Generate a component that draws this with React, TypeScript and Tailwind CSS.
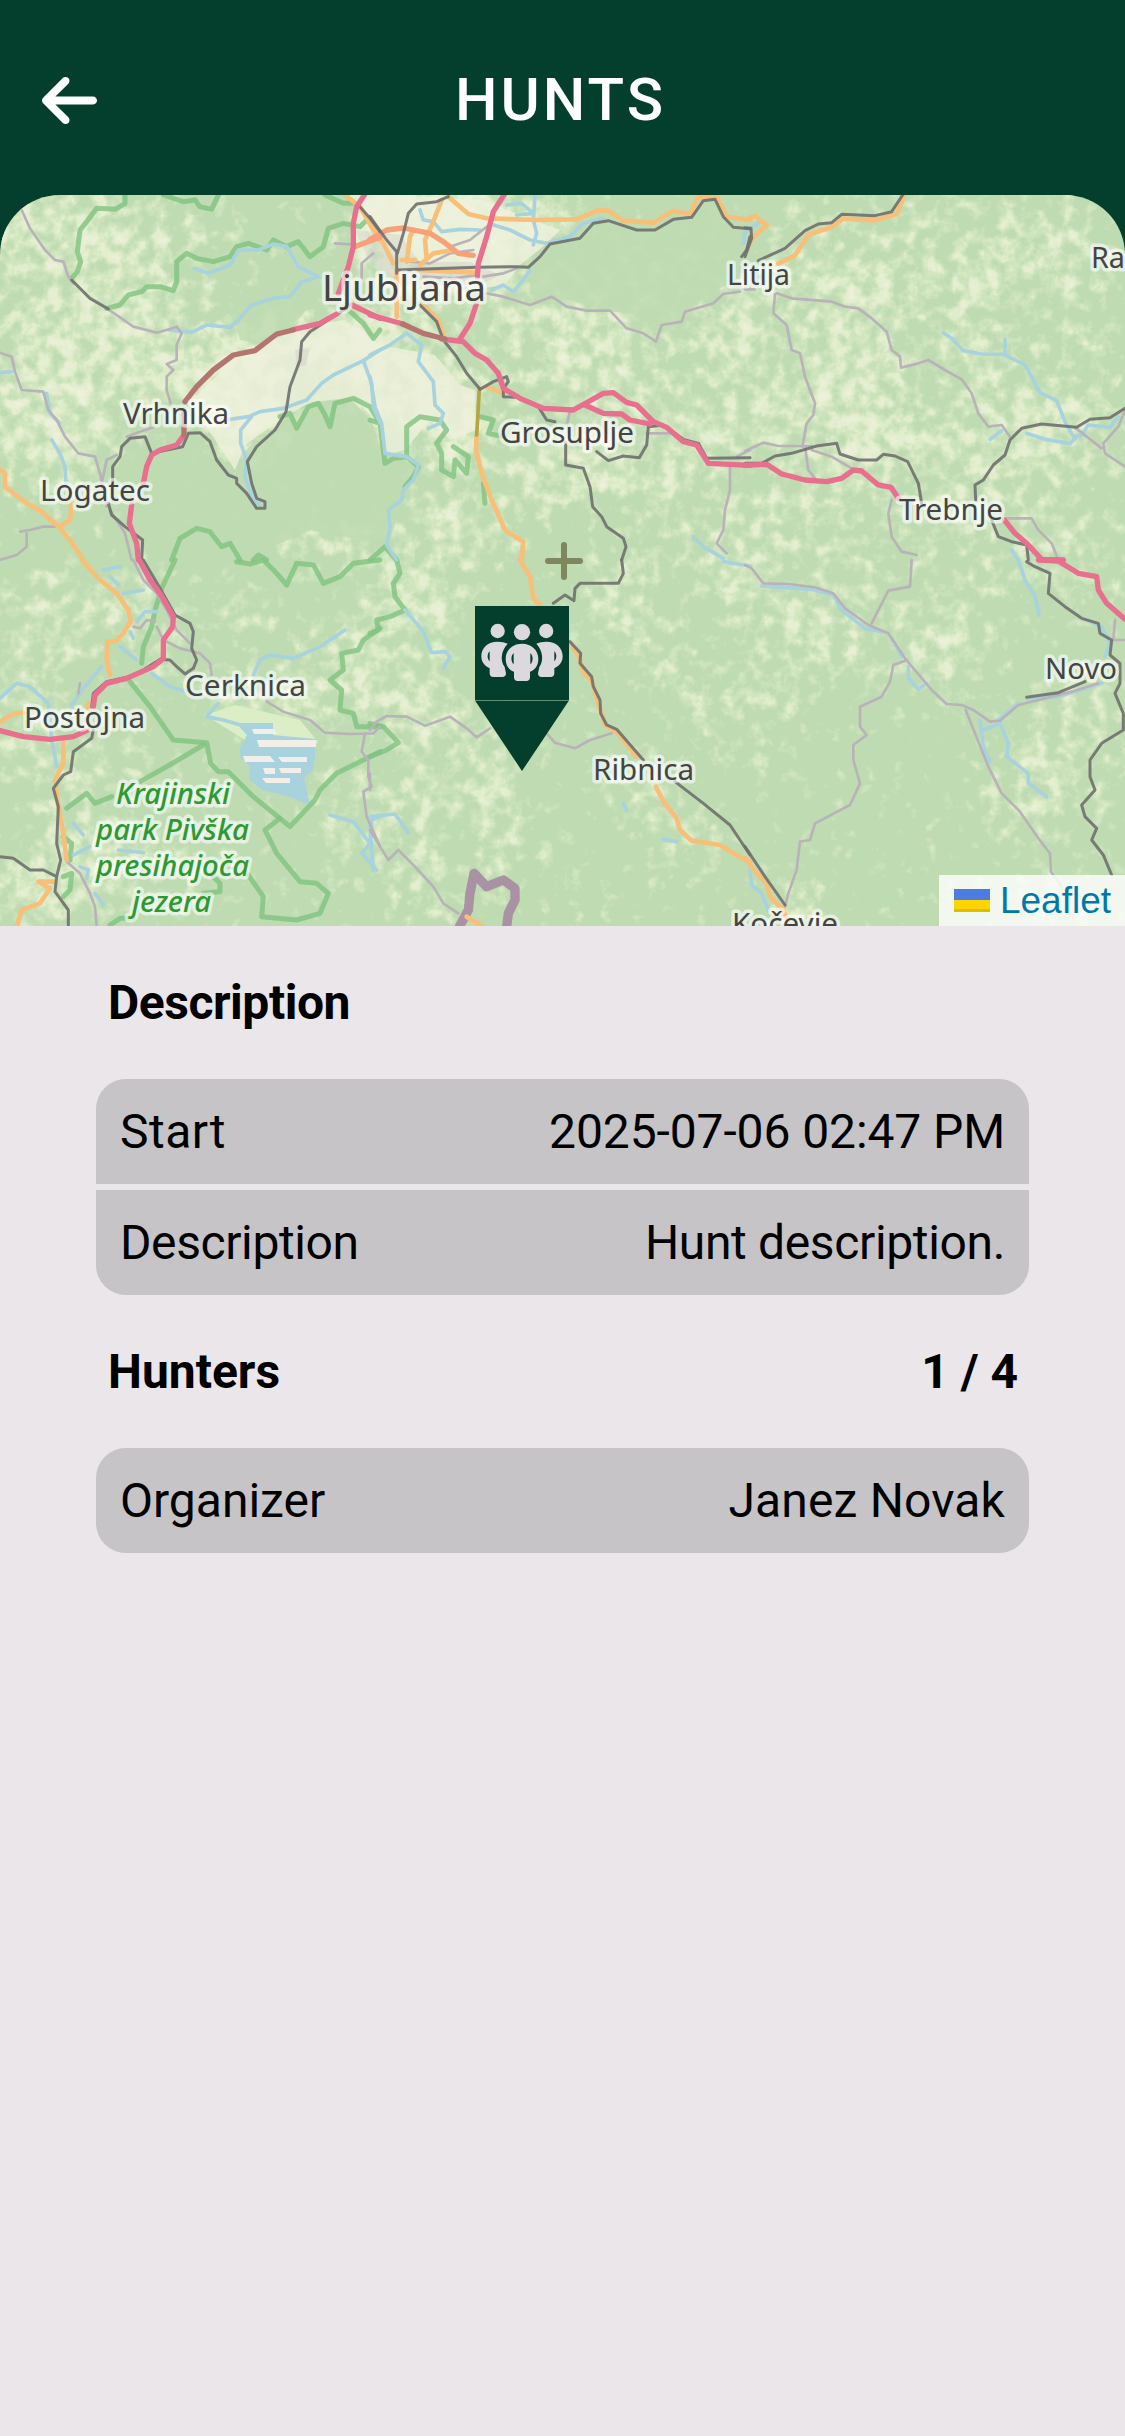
import React from "react";
import { FaArrowLeft } from "react-icons/fa6";

type Kind = "motorway" | "trunk" | "primary" | "rail" | "minor" | "river" | "park" | "border" | "tunnel" | "orange";

const STYLE: Record<Kind, { stroke: string; width: number; opacity?: number }> = {
  park: { stroke: "#80c37f", width: 15, opacity: 0.8 },
  river: { stroke: "#a8d3de", width: 11 },
  minor: { stroke: "#b9b3b9", width: 8 },
  primary: { stroke: "#f8bf79", width: 14 },
  orange: { stroke: "#f6a178", width: 16 },
  rail: { stroke: "#6f706e", width: 9, opacity: 0.9 },
  motorway: { stroke: "#e86f8d", width: 16 },
  tunnel: { stroke: "#b67470", width: 16 },
  trunk: { stroke: "#b5a640", width: 11 },
  border: { stroke: "#a585a0", width: 28, opacity: 0.85 },
};

const ORDER: Kind[] = ["park", "river", "minor", "border", "primary", "orange", "trunk", "rail", "motorway", "tunnel"];

/* Map sheets, each drawn on a grid three times finer than the page. */
const SHEETS: { x: number; y: number; lines: [Kind, string][] }[] = [
  {
    x: 0,
    y: 190,
    lines: [
      ["park", "M375 10 375 40 345 58 290 55 260 95 240 120 232 185 242 215 232 245 215 265"],
      ["park", "M320 355 360 345 385 315 425 305 440 290 480 290 520 302 530 275 530 215 560 190 590 205 640 215 690 200 710 170 745 160 800 180 820 150 860 170 895 155 930 200 970 170 985 115 1030 100 1080 110 1100 90"],
      ["park", "M490 15 550 35 585 30 600 50 635 58 655 15"],
      ["park", "M975 15 1030 40 1060 40"],
      ["park", "M515 1110 540 1045 590 1015 630 1025 665 1070 690 1060 720 1110M760 1110 775 1095 800 1110"],
      ["park", "M840 680 870 670 890 715 925 650 955 640 975 675 990 710 1005 640 1060 625 1110 650 1140 700"],
      ["park", "M1045 360 1090 400 1120 445 1140 420"],
      ["river", "M583 235 625 250 690 225 715 180 775 180 820 162 860 170 895 230 955 260 905 275 870 320 820 325 755 345 715 390 690 412 620 405 575 427 510 420"],
      ["river", "M690 688 745 680 780 665 850 655 920 630 965 580 1000 555 1090 512 1140 480M1090 512 1115 580 1120 650 1140 700"],
      ["river", "M755 680 722 720 722 760 740 810 735 860 760 930 780 945"],
      ["river", "M155 750 180 790 195 830 198 880M0 548 35 545"],
      ["river", "M140 610 150 670 180 700"],
      ["minor", "M65 60 90 115 135 180 165 210 190 215 205 260 220 280"],
      ["minor", "M320 355 350 375 400 410 470 428 500 420 530 410 545 430 530 465 530 510 500 522 520 540 500 560 500 600 512 640"],
      ["minor", "M0 488 35 500 45 545 65 600 130 605 145 660 170 690 195 740 235 790 285 800 300 850 320 950"],
      ["minor", "M350 795 320 810 305 880M60 1025 90 1020 130 1010 180 1010M80 1030 80 1070 50 1095 0 1110"],
      ["minor", "M330 960 375 1030 395 1110M1005 160 1080 165M1120 190 1085 220 1085 265"],
      ["minor", "M380 740 420 725 460 712"],
      ["primary", "M0 840 15 850 15 890 80 940 125 965 180 1015 210 1050 250 1110M180 1010 210 990 215 940"],
      ["primary", "M1035 15 1080 50 1120 120 1140 150"],
      ["orange", "M1060 172 1140 142"],
      ["motorway", "M1095 12 1070 50 1060 100 1060 170 1045 230 1015 310"],
      ["motorway", "M1055 345 1140 385"],
      ["tunnel", "M555 635 590 590 640 540 700 495 765 482 830 432 880 420"],
      ["motorway", "M875 420 960 400 1010 372"],
      ["tunnel", "M552 670 552 735"],
      ["motorway", "M552 735 530 765 480 780 455 795 440 830 430 880M395 945 388 1000 410 1060 415 1110"],
      ["rail", "M1140 125 1110 85 1075 45"],
      ["rail", "M1040 355 1000 380 930 425 905 455 900 510 870 590 858 665 825 720 770 770 742 815 755 880 770 925 795 935 795 955 770 955 740 910 710 880 710 865 685 855 650 810 630 755 600 728 565 730 548 770 500 780 455 790 435 740 390 745 365 770 360 800 338 830 338 880M325 940 335 975 375 1010 428 1050 425 1110"],
      ["rail", "M215 270 270 325 325 357"],
    ],
  },
  {
    x: 370,
    y: 190,
    lines: [
      ["park", "M0 690 30 700 40 780 45 820 70 805 110 800 145 830 130 860 105 890M110 790 110 710 150 680 210 690 230 720 200 760 215 790 215 840 250 860 255 810 290 850 295 800 250 770"],
      ["park", "M330 680 370 690 355 730 400 740M340 880 345 940M0 1110 45 1070 80 1110"],
      ["river", "M0 495 60 465 110 430 155 465 145 515 190 575 195 645 220 670 210 700 175 715"],
      ["river", "M0 560 15 650 35 700 45 790 110 800 145 825 130 870 100 900 95 930 55 960 60 1010 50 1065 80 1110"],
      ["river", "M150 60 160 90 190 95 215 125 270 118 330 120M370 105 420 120 480 150 530 160 600 140 640 100 700 85"],
      ["river", "M490 165 500 130 490 90 495 20M410 45 455 40 490 70 440 75M480 240 460 270 430 305 400 285 365 300"],
      ["river", "M1125 130 1120 160M970 1040 1000 1070 1060 1105"],
      ["minor", "M350 310 400 320 480 345 545 320 590 350 650 362 720 362 770 415 820 430 858 455 875 405 935 395 945 365 1030 340 1060 312 1110 305"],
      ["minor", "M1080 830 1080 900 1065 960 1060 1020 1040 1060 1070 1090M600 660 590 710M830 730 900 730M1100 800 1140 780M240 170 300 150 350 110M120 215 180 220 240 190 310 180M160 260 250 265 320 255M340 260 400 250 440 235"],
      ["primary", "M235 20 295 72 350 85 500 90 620 88 680 62 715 62 760 92 850 98 910 62 960 72 985 22 1040 20 1070 80 1140 90"],
      ["primary", "M0 85 40 160 70 220M215 30 190 95 165 150 170 205M110 215 120 140 130 120M95 210 135 210M150 225 190 190 250 180M140 240 320 248M80 240 80 380"],
      ["primary", "M320 735 318 780 335 850 365 930 405 1020 460 1055 455 1110M350 590 400 610"],
      ["trunk", "M328 595 325 650 320 735"],
      ["primary", "M160 345 205 390 222 440"],
      ["orange", "M0 148 50 120 100 114 180 130 220 155 265 190 310 196"],
      ["motorway", "M405 10 370 65 350 140 325 220 322 260M318 345 300 400 268 450"],
      ["motorway", "M0 375 100 402M215 447 280 455 315 490 350 510 385 550 400 595 450 625 520 655 610 660 700 610 730 608 770 637 800 645 850 695 890 712 940 755 980 765 1015 820 1140 826"],
      ["motorway", "M645 645 700 670 755 672 780 690 840 702"],
      ["tunnel", "M98 402 160 430 225 447"],
      ["rail", "M0 80 50 150 80 185 80 250M80 240 320 232 440 230 475 232 510 200 540 162 630 145 670 100 715 92 800 120 855 120 910 88 965 82 1000 32 1035 28 1060 80 1090 112 1140 116"],
      ["rail", "M235 20 200 35 140 42 115 70 100 130 82 190M150 345 200 395 220 450 260 500 290 550 330 598 370 575 410 560 415 575 400 595 400 620 440 622 505 650 530 690 555 695"],
      ["rail", "M680 785 715 812 760 798 808 803 830 765 835 710 880 705 940 748 985 760 1010 805 1140 803"],
      ["rail", "M587 755 587 825 640 835 660 890 668 950 695 980 710 1010 760 1045 768 1070 755 1110M1140 140 1130 180 1115 200"],
    ],
  },
  {
    x: 745,
    y: 190,
    lines: [
      ["river", "M595 428 620 445 655 482 710 492 775 493 840 525 885 608 935 632 960 695 985 740 1010 735 1030 705 1095 712 1120 680M780 448 780 490"],
      ["river", "M735 748 770 722M845 730 900 748 975 760 1000 735M800 1080 820 1110M0 125 40 100"],
      ["minor", "M0 298 30 298M95 310 140 325 260 335 300 350 340 355 380 385 425 425 440 480 465 500 468 533 520 520 550 510 600 540 650 568 680 610 700 670 730 710 770 705 795 740"],
      ["minor", "M90 312 85 370 125 405 140 480 165 490 180 560 210 640 205 675 185 700 172 770M0 783 55 758 100 768 200 768M180 770 190 840 210 865M200 780 260 800 320 835M440 930 430 970 440 1040 470 1085 515 1095"],
      ["minor", "M1140 660 1120 710 1075 760 1080 790 1140 830M990 712 1070 775M775 985 860 985 880 1020 920 1060 940 1110"],
      ["primary", "M0 90 30 78 65 105 20 145 5 180"],
      ["primary", "M478 18 455 71 390 91 295 86 260 111 190 134 150 196 100 221"],
      ["motorway", "M0 826 65 823 110 852 180 870 245 875 290 865 325 840 350 843 400 885 438 892 460 925M778 990 810 1030 845 1060 890 1108 955 1110"],
      ["rail", "M0 113 18 115 20 145 0 200M40 212 120 175 180 122 220 102 260 98 290 73 390 77 440 65 475 12"],
      ["rail", "M0 820 50 820 90 798 140 790 215 768 275 760 285 792 340 810 395 810 415 793 450 798 488 815 520 880 530 940"],
      ["rail", "M1140 655 1095 683 1035 688 995 712 890 702 830 715 795 750 780 795 745 825 715 870 690 885 692 930M740 990 760 1040 800 1055 845 1065 850 1110"],
    ],
  },
  {
    x: 0,
    y: 560,
    lines: [
      ["park", "M525 0 485 85 465 150 455 200 430 260 425 310M390 365 450 440 520 540 620 548 632 610 655 635 685 635 760 710 840 775 870 800 945 720 960 690 1010 640 1140 575"],
      ["park", "M840 775 795 810 830 880 900 965 950 970 985 1000 960 1060 890 1080 785 1070 790 1010 745 945M610 555 500 620 420 665M200 745 260 700 285 730 335 710"],
      ["park", "M710 5 750 12 790 0 830 40 860 75 890 10 940 15 970 70 1020 50 1060 10 1140 0"],
      ["park", "M1140 205 1090 240 1075 270 1025 280 1030 330 990 360 1025 390 1020 450 1060 460 1070 500 1140 500"],
      ["park", "M190 830 215 850 210 900M190 950 215 940 210 990 190 1010M400 1075 360 1075 330 1095M640 950 660 970 660 995 610 1000"],
      ["river", "M310 30 360 20M330 50 355 75M370 100 430 90M410 185 435 155 470 155M390 215 400 235M360 260 410 300M305 320 250 385 215 435"],
      ["river", "M0 415 50 370 90 380 145 430 155 540 170 620M455 340 510 380 560 395M1035 210 960 260 880 295 810 285 780 300 760 345M655 430 620 470 670 480 740 500"],
      ["river", "M990 765 1060 785 1110 850 1085 880 1130 930M1110 850 1115 780 1140 770M220 790 250 825M220 885 270 860M240 920 265 930 260 955M285 1000 310 1035M355 870 430 878"],
      ["minor", "M400 0 430 60 470 100 500 150 530 210 570 250M470 200 490 240 540 265 600 280 630 310 635 345M400 200 420 205 440 180 465 185"],
      ["minor", "M800 425 850 455 930 480 975 518 1050 522 1120 520 1140 500M1095 520 1085 575 1105 600 1105 650 1115 680 1090 695 1100 770 1140 860"],
      ["minor", "M200 905 240 940 270 1000 285 1040 290 1100M240 370 235 400"],
      ["primary", "M245 0 300 60 350 100 385 150 392 185 370 220 345 245 322 245 320 300 330 345M0 485 40 462 70 458M265 430 262 445M190 545 190 610 165 660 175 740 190 820 200 900M160 965 115 965 150 985 120 1030 65 1050 50 1100"],
      ["motorway", "M418 0 450 60 480 100 520 170 518 200 490 240 490 295 460 320 380 355 320 370 285 405 280 440M0 512 70 530 150 538 220 530 260 512"],
      ["rail", "M430 0 480 85 525 165 570 190 580 215 575 265 590 300 580 325 555 342 530 320 510 300 480 298 430 330 380 352 320 365 280 400 275 440M280 510 275 535 220 575 212 635 190 645 160 685 175 740 170 850 182 900 170 950 130 930 90 930 40 895 0 890M170 950 165 995 205 1050 205 1095"],
    ],
  },
  {
    x: 370,
    y: 560,
    lines: [
      ["park", "M80 0 90 40 70 70 75 110 105 150 60 170 20 180 25 210 0 220M0 490 40 500 85 548 50 570 0 590"],
      ["river", "M105 150 160 215 185 278 225 275 240 290 220 325M0 770 75 762 115 818M0 800 10 930M760 730 770 750M880 838 920 845M1060 5 1140 18"],
      ["minor", "M0 510 20 485 50 468 110 470 165 497 240 470 290 505 320 532 360 505M530 520 555 548 615 565 660 540 725 520M0 810 55 900 85 870 130 915 190 980 220 1030 265 1060M0 640 0 690"],
      ["border", "M268 1100 295 1050 300 1000 312 940 350 980 400 960 435 985 435 1020 415 1060 410 1100"],
      ["primary", "M450 0 480 50 490 115 510 135M600 250 628 290 640 340 665 360 685 430 705 495 740 515 800 590M858 680 880 725 920 775 930 810 965 842 1050 855 1090 880 1140 905M290 1070 335 1098"],
      ["rail", "M755 0 760 40 745 70 630 70 615 85 612 122 585 105 550 130M600 245 632 280 630 310 665 350 670 380 690 420 692 460 710 495 740 508 820 600M915 665 1000 730 1080 795 1140 885"],
    ],
  },
  {
    x: 745,
    y: 560,
    lines: [
      ["river", "M50 78 200 88 265 105 290 150 360 205 410 215M440 235 470 290M490 320 490 355 520 388 545 370M705 480 715 560 735 605M715 510 765 490 790 550 785 590 850 640 850 670 905 710M820 430 760 480M820 0 840 60 870 110 882 165M1020 178 1070 200 1095 250 1080 290M850 418 940 410 1070 370M15 930 20 975 50 1000 70 1050"],
      ["minor", "M0 15 20 25 55 70 130 72 210 82 265 100 300 145 370 195 430 220 480 295 560 390 605 432 650 435 685 450 735 485 765 482 820 435 900 415 980 395 1060 370M500 0 495 80 430 92 380 190M480 302 445 315 435 365 410 410 345 440 345 500 365 525 325 555 325 600 345 670 315 735 210 790 195 840 165 845 155 930 130 1000 120 1040"],
      ["minor", "M662 450 690 520 730 620 770 700 825 755 880 835 915 880 918 935 950 980M1110 180 1105 240 1140 240"],
      ["primary", "M0 895 35 940 65 970 75 1010 115 1050 130 1095"],
      ["motorway", "M880 0 940 3 1000 40 1055 50 1060 90 1085 130 1140 178"],
      ["rail", "M0 860 60 950 120 1035M845 5 870 20 915 40 910 100 960 140 1010 175 1060 190 1065 220 1100 240 1095 285 1125 310 1125 370 1110 400 1135 460 1135 510 1070 550 1035 600 1035 650 1050 690 1010 735 1020 770 1055 805 1040 840 1075 885 1100 945M845 412 940 398 1020 365"],
    ],
  },
];

/* How open the terrain is: cx, cy, rx, ry, strength */
const OPEN: [number, number, number, number, number][] = [
  [60, 330, 120, 140, 0.2], [110, 230, 130, 50, 0.2], [140, 340, 130, 60, 0.2], [50, 440, 60, 70, 0.2],
  [230, 390, 60, 55, 0.36], [290, 340, 45, 35, 0.3], [390, 370, 60, 70, 0.36], [350, 340, 40, 30, 0.3],
  [260, 435, 35, 40, 0.35], [430, 240, 80, 60, 0.5], [510, 220, 80, 25, 0.42], [390, 210, 40, 30, 0.4],
  [450, 420, 35, 50, 0.35], [500, 290, 60, 40, 0.2], [560, 360, 90, 60, 0.2], [480, 490, 70, 80, 0.17],
  [580, 470, 60, 40, 0.27], [650, 330, 110, 90, 0.16], [640, 450, 80, 50, 0.16], [720, 430, 60, 30, 0.24],
  [800, 340, 100, 80, 0.2], [900, 360, 100, 110, 0.16], [840, 430, 90, 50, 0.2], [1040, 330, 90, 110, 0.17],
  [940, 240, 180, 60, 0.18], [1080, 440, 60, 50, 0.2], [1010, 440, 60, 40, 0.22], [890, 480, 130, 50, 0.16],
  [700, 520, 80, 60, 0.17], [800, 560, 90, 60, 0.18], [990, 540, 90, 60, 0.19], [1090, 560, 50, 60, 0.16],
  [620, 600, 35, 50, 0.3], [670, 660, 30, 35, 0.25], [700, 710, 22, 40, 0.2], [780, 660, 60, 60, 0.18],
  [880, 640, 90, 50, 0.17], [960, 650, 50, 50, 0.18], [1080, 740, 60, 80, 0.2], [1020, 800, 50, 60, 0.2],
  [430, 560, 60, 70, 0.18], [400, 640, 60, 80, 0.22], [460, 760, 60, 60, 0.22], [500, 830, 30, 70, 0.22],
  [400, 830, 40, 60, 0.22], [430, 890, 40, 40, 0.2], [640, 790, 35, 40, 0.24], [690, 840, 40, 30, 0.24],
  [50, 620, 60, 50, 0.24], [30, 720, 50, 60, 0.24], [130, 600, 30, 40, 0.26], [240, 610, 40, 30, 0.2],
  [330, 670, 40, 60, 0.2], [270, 700, 60, 25, 0.3], [110, 770, 50, 30, 0.2], [70, 850, 40, 70, 0.24],
  [20, 890, 40, 40, 0.3], [130, 870, 70, 50, 0.22], [340, 810, 30, 60, 0.2], [330, 540, 60, 30, 0.24],
  [180, 520, 20, 30, 0.12], [800, 900, 30, 30, 0.28], [730, 590, 30, 25, 0.2], [1060, 900, 60, 30, 0.2],
  [400, 710, 50, 30, 0.2], [170, 650, 30, 40, 0.22], [750, 730, 40, 50, 0.14], [560, 870, 25, 50, 0.1],
];

const TOWNS: [string, number, number, number, number][] = [
  ["Ljubljana", 322, 301, 164, 36], ["Vrhnika", 123, 424, 106, 29], ["Logatec", 40, 501, 110, 29],
  ["Litija", 727, 285, 63, 29], ["Grosuplje", 500, 443, 134, 29], ["Trebnje", 899, 520, 104, 29],
  ["Ra", 1091, 268, 34, 29], ["Cerknica", 185, 696, 121, 29], ["Postojna", 24, 728, 121, 29],
  ["Ribnica", 593, 780, 101, 29], ["Novo", 1045, 679, 72, 29], ["Kočevje", 732, 934, 106, 29],
];

const PARK_LABEL: [string, number, number, number][] = [
  ["Krajinski", 116, 804, 114], ["park Pivška", 96, 840, 153], ["presihajoča", 96, 876, 153], ["jezera", 132, 912, 79],
];

function TerrainFilter({ id, seed, color, gain, cut }: { id: string; seed: number; color: string; gain: number; cut: number }) {
  return (
    <filter id={id} x="0" y="0" width="100%" height="100%" colorInterpolationFilters="sRGB">
      <feGaussianBlur in="SourceGraphic" stdDeviation="12" result="density" />
      <feTurbulence type="fractalNoise" baseFrequency="0.065" numOctaves="4" seed={seed} result="noise" />
      <feComposite in="density" in2="noise" operator="arithmetic" k1={0} k2={0.5} k3={0.5} k4={0} result="sum" />
      <feColorMatrix in="sum" type="matrix" values={`0 0 0 0 0  0 0 0 0 0  0 0 0 0 0  0 0 0 ${gain} ${cut}`} result="cover" />
      <feFlood floodColor={color} />
      <feComposite operator="in" in2="cover" />
    </filter>
  );
}

function MapView() {
  return (
    <svg className="block h-full w-full" viewBox="0 195 1125 731" fontFamily='"Noto Sans", "Open Sans", sans-serif'>
      <defs>
        <TerrainFilter id="meadow" seed={4} color="#dbecc6" gain={6} cut={-1.95} />
        <TerrainFilter id="field" seed={4} color="#edf0da" gain={6} cut={-2.6} />
      </defs>
      <rect y="190" width="1125" height="740" fill="#bedbb2" />
      {["url(#meadow)", "url(#field)"].map((f) => (
        <g key={f} filter={f}>
          <rect y="190" width="1125" height="740" fill="#fff" fillOpacity="0.04" />
          {OPEN.map(([cx, cy, rx, ry, o], i) => (
            <ellipse key={i} cx={cx} cy={cy} rx={rx} ry={ry} fill="#fff" fillOpacity={o} />
          ))}
        </g>
      ))}
      <path
        d="M552 243 590 222 640 224 700 215 725 190 740 225 760 245 735 280 700 300 670 330 655 335 640 315 600 310 570 300 530 295 530 270Z M232 310 275 295 318 275 322 290 300 318 262 345 240 340Z"
        fill="#bedbb2"
        opacity="0.8"
      />
      <g fill="#eef1dc" opacity="0.8">
        <path d="M348 195 395 195 480 200 560 230 545 245 520 265 505 285 470 290 440 262 400 260 370 235Z" />
        <path d="M188 404 235 358 305 325 345 320 380 345 435 355 460 385 475 390 476 430 450 440 430 420 405 450 386 455 375 420 355 398 305 405 280 420 245 445 235 470 205 425Z" />
      </g>
      <path
        d="M190 435 215 468 235 475 246 450 285 418 297 428 312 402 350 398 372 422 384 460 418 465 400 510 388 545 310 530 265 550 190 545 150 560 140 500 150 450Z"
        fill="#bedbb2"
        opacity="0.85"
      />
      <g fill="#d3d3cb" opacity="0.5">
        <path d="M355 230 400 235 420 262 470 262 500 275 480 285 400 285 370 262Z" />
        <path d="M295 350 310 348 306 365 297 368Z" />
      </g>
      <path d="M205 715 235 705 300 720 318 742 300 760 245 740Z" fill="#dbeec6" />
      <path
        fill="#a8d3de"
        d="M236 723 273 723 273 735 316 739 315 757 313 770 304 778 310 805 290 797 262 790 249 779 250 766 240 757 240 748 247 735Z"
      />
      <path
        fill="#f3efe8"
        d="M252 729h22l4 5h-24zM257 740h59v7h-57zM243 756h27l5 6h-30zM278 757h29v5h-25zM263 768h12v6h-10zM279 768h22v5h-20zM262 778h28v5h-24z"
      />
      {ORDER.map((kind) => (
        <g
          key={kind}
          fill="none"
          stroke={STYLE[kind].stroke}
          strokeWidth={STYLE[kind].width}
          strokeOpacity={STYLE[kind].opacity ?? 1}
          strokeLinejoin="round"
          strokeLinecap="round"
        >
          {SHEETS.map((s) => (
            <g key={`${s.x}-${s.y}`} transform={`translate(${s.x} ${s.y}) scale(0.33333)`}>
              {s.lines.filter(([k]) => k === kind).map(([, d], i) => (
                <path key={i} d={d} />
              ))}
            </g>
          ))}
        </g>
      ))}
      <g strokeLinejoin="round" stroke="#fff" strokeOpacity="0.6" paintOrder="stroke" strokeWidth="7">
        {TOWNS.map(([name, x, y, w, size]) => (
          <text key={name} x={x} y={y} textLength={w} lengthAdjust="spacingAndGlyphs" fontSize={size} fill="#444">
            {name}
          </text>
        ))}
        {PARK_LABEL.map(([name, x, y, w]) => (
          <text key={name} x={x} y={y} textLength={w} lengthAdjust="spacingAndGlyphs" fontSize={29} fontStyle="italic" fontWeight="500" fill="#2b9a32">
            {name}
          </text>
        ))}
      </g>
      <path d="M564 545v32M548 561h32" stroke="#80875f" strokeWidth="6" strokeLinecap="round" />
      <g>
        <rect x="475" y="606" width="94" height="94" fill="#043f2d" />
        <path d="M475 700.6h94L522 771Z" fill="#043f2d" />
        <g transform="translate(450 590) scale(0.33333)" fill="#dcd9de">
          <circle cx="143" cy="123" r="21.500" />
          <circle cx="288.500" cy="123" r="21.500" />
          <circle cx="216" cy="126.500" r="24.500" />
          <path
            fillRule="evenodd"
            d="M143 155c12 0 22 2 30 6-20 22-23 50-9 70l4 19c0 7-4 11-11 11h-27c-7 0-11-4-11-11v-15c-15-7-25-19-25-36 0-26 20-44 49-44zM119 184c-8 8-8 22 0 30z"
          />
          <path
            fillRule="evenodd"
            d="M289 155c-12 0-22 2-30 6 20 22 23 50 9 70l-4 19c0 7 4 11 11 11h27c7 0 11-4 11-11v-15c15-7 25-19 25-36 0-26-20-44-49-44zM313 184c8 8 8 22 0 30z"
          />
          <path
            fillRule="evenodd"
            d="M216 161c29 0 49 20 49 45 0 20-9 33-25 39v17c0 7-4 11-11 11h-26c-7 0-11-4-11-11v-17c-16-6-25-19-25-39 0-25 20-45 49-45zM191 189c-9 9-9 25 0 34zM241 189c9 9 9 25 0 34z"
          />
        </g>
      </g>
    </svg>
  );
}

function Heading({ label, value }: { label: React.ReactNode; value?: string }) {
  return (
    <div className="flex h-[153px] items-center justify-between pr-[11px] pl-3 text-5xl leading-[56px] font-bold">
      <h2>{label}</h2>
      {value && <span>{value}</span>}
    </div>
  );
}

function Card({ rows }: { rows: { label: React.ReactNode; value: React.ReactNode }[] }) {
  return (
    <dl className="flex flex-col gap-1.5 overflow-hidden rounded-[30px]">
      {rows.map(({ label, value }, i) => (
        <div key={i} className="flex h-[105px] items-center justify-between bg-[#c6c4c7] px-6 text-5xl leading-[56px]">
          <dt>{label}</dt>
          <dd>{value}</dd>
        </div>
      ))}
    </dl>
  );
}

export default function App() {
  return (
    <div className="min-h-[2436px] w-[1125px] bg-[#eae6e9] font-['Roboto',sans-serif] text-black">
      <div className="bg-[#043f2d]">
        <header className="grid h-[195px] grid-cols-[1fr_auto_1fr] items-center pt-1.5 pr-[46px] pl-[42px] text-white">
          <FaArrowLeft className="h-[63px] w-[55px]" />
          <h1 className="-mt-0.5 text-[60px] leading-none font-medium tracking-[3px]">HUNTS</h1>
        </header>
        <section className="relative h-[731px] overflow-hidden rounded-t-[60px]">
          <MapView />
          <div className="absolute right-0 bottom-0 flex h-[51px] w-[186px] items-center justify-between bg-white/80 pr-[14px] pl-[15px] font-['Liberation_Sans',sans-serif] text-[37px] text-[#0078a8]">
            <span className="flex h-[23px] w-9 flex-col">
              <span className="h-[11px] bg-[#4c7be1]" />
              <span className="h-[9px] bg-[#ffd500]" />
              <span className="h-[3px] bg-[#e0bc00]" />
            </span>
            <span>Leaflet</span>
          </div>
        </section>
      </div>
      <main className="px-24">
        <Heading label={<span className="tracking-[-0.45px]">Description</span>} />
        <Card
          rows={[
            { label: <span className="tracking-[0.5px]">Start</span>, value: <span className="tracking-[-0.1px]">2025-07-06 02:47 PM</span> },
            { label: <span className="tracking-[-0.4px]">Description</span>, value: <span className="tracking-[-0.35px]">Hunt description.</span> },
          ]}
        />
        <Heading label="Hunters" value="1 / 4" />
        <Card rows={[{ label: "Organizer", value: <span className="tracking-[0.15px]">Janez Novak</span> }]} />
      </main>
    </div>
  );
}
